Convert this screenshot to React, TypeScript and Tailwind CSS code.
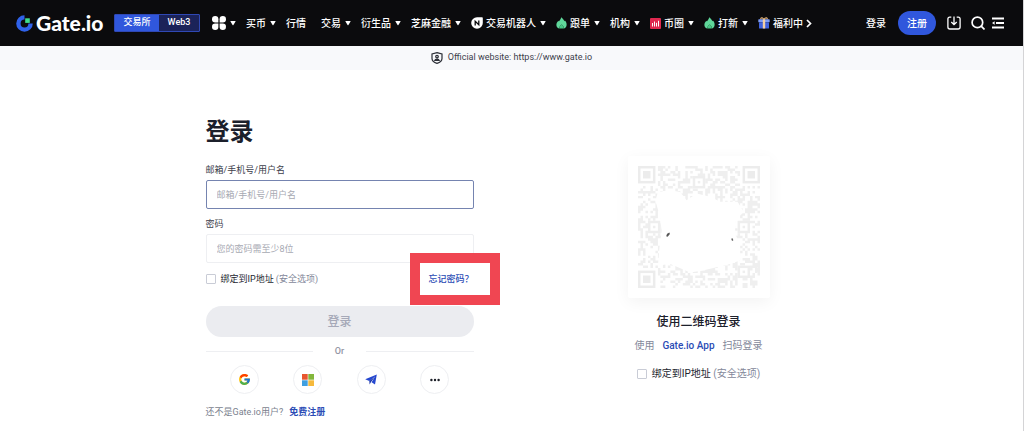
import type { ReactNode } from "react";
import { FcGoogle } from "react-icons/fc";

const MODULES = 49;

const FINDERS = [
  [0, 0],
  [42, 0],
  [0, 42]
];

const ALIGNMENTS = [
  [22, 4],
  [4, 22],
  [40, 22],
  [40, 40]
];

function inSquare(x: number, y: number, left: number, top: number, size: number) {
  return x >= left && x < left + size && y >= top && y < top + size;
}

// Small deterministic generator, so the code looks the same on every render.
function buildQrPath() {
  let seed = 20231;
  let d = "";
  for (let y = 0; y < MODULES; y++) {
    for (let x = 0; x < MODULES; x++) {
      seed = (seed * 1103515245 + 12345) % 2147483648;
      if (FINDERS.some(([fx, fy]) => inSquare(x, y, fx - 1, fy - 1, 9))) continue;
      if (ALIGNMENTS.some(([ax, ay]) => inSquare(x, y, ax, ay, 5))) continue;
      if (seed / 2147483648 < 0.45) d += `M${x} ${y}h1v1h-1z`;
    }
  }
  return d;
}

const QR_PATH = buildQrPath();

function QrCode() {
  return (
    <svg viewBox="0 0 49 49" className="block h-[122px] w-[122px]" role="img" aria-label="QR">
      <path d={QR_PATH} fill="#efefef" />
      {FINDERS.map(([x, y]) => (
        <g key={`${x}-${y}`}>
          <rect x={x + 0.5} y={y + 0.5} width="6" height="6" fill="none" stroke="#ececec" />
          <rect x={x + 2} y={y + 2} width="3" height="3" fill="#ececec" />
        </g>
      ))}
      {ALIGNMENTS.map(([x, y]) => (
        <g key={`${x}-${y}`}>
          <rect x={x + 0.5} y={y + 0.5} width="4" height="4" fill="none" stroke="#eeeeee" />
          <rect x={x + 2} y={y + 2} width="1" height="1" fill="#eeeeee" />
        </g>
      ))}
      <path
        d="M8 10.4 13 9.7 17 10.4 19.5 13.8 23.6 11 29 12.4 33 14.4 40 14.4 42.5 18.5 39 22 39 27 41 32 41 38 37 39.4 26 42 21 42.8 13 39.4 8 40 8.7 32 9.5 26 8.7 20 7 14z"
        fill="#fff"
      />
      <path d="M11.3 28.2l.4-1 .9-.5.2.6-.9 1.1z" fill="#555" />
      <path d="M37.4 29.2l.6-.2.3.8-.5.3z" fill="#666" />
    </svg>
  );
}

function Caret() {
  return (
    <svg viewBox="0 0 6 6" className="h-[6px] w-[6px] shrink-0" aria-hidden="true">
      <path d="M.8 1h4.4q.5 0 .3.5L3.4 5q-.4.5-.8 0L.5 1.5Q.3 1 .8 1z" fill="#fff" />
    </svg>
  );
}

function Flame() {
  return (
    <svg viewBox="0 0 11 12" className="h-3 w-[11px] shrink-0" aria-hidden="true">
      <path
        d="M5.2.3C6.8 1.4 8 2.9 8.3 4.3l.6-.7C10.2 5 10.9 6.6 10.6 8.2c-.2 1.8-1.5 3-2.9 3.4.4-1.4-.3-2.8-2-4.2-1.9 1.4-2.6 2.8-2.200 4.200C1.800 11.200.5 10 .4 8.200.2 6.400 1.200 5 2.400 3.700l.5.7C3.900 3.200 4.900 1.900 5.200.3z"
        fill="#5fd79a"
      />
      <path d="M5.7 7.400c1.700 1.400 2.400 2.800 2 4.200H3.500c-.4-1.400.3-2.800 2.200-4.200z" fill="#48c785" />
    </svg>
  );
}

function BotIcon() {
  return (
    <svg viewBox="0 0 12 12" className="h-3 w-3 shrink-0" aria-hidden="true">
      <path d="M6 .2h5q.8 0 .8.8v5A5.800 5.800 0 1 1 6 .2z" fill="#fff" />
      <path d="M4.200 8.600V4.200l3.600 3.600V3.400" fill="none" stroke="#0b0b0d" strokeWidth="1.300" />
    </svg>
  );
}

function ChartIcon() {
  return (
    <svg viewBox="0 0 11 11" className="h-[11px] w-[11px] shrink-0" aria-hidden="true">
      <rect width="11" height="11" rx="1" fill="#e0284f" />
      <path d="M2.500 8.500V5M4.500 8.500V3.500M6.500 8.500V4.800M8.500 8.500V2.800" stroke="#fff" strokeWidth="1" />
    </svg>
  );
}

function GiftIcon() {
  return (
    <svg viewBox="0 0 12 12" className="h-3 w-3 shrink-0" aria-hidden="true">
      <path d="M6 2.600C4.800.2 2.200.2 3 2.400M6 2.600C7.200.2 9.800.2 9 2.400" fill="none" stroke="#eab77c" strokeWidth="1.200" />
      <rect x=".3" y="2.300" width="11.400" height="3" rx=".6" fill="#7d9cf5" />
      <rect x="1" y="5.300" width="10" height="6.200" rx=".6" fill="#4063df" />
      <rect x="4.800" y="2.300" width="2.400" height="9.200" fill="#f3cfa3" />
    </svg>
  );
}

type NavItem = { label: string; icon?: ReactNode; menu?: boolean };

const NAV: NavItem[] = [
  { label: "买币", menu: true },
  { label: "行情" },
  { label: "交易", menu: true },
  { label: "衍生品", menu: true },
  { label: "芝麻金融", menu: true },
  { label: "交易机器人", icon: <BotIcon />, menu: true },
  { label: "跟单", icon: <Flame />, menu: true },
  { label: "机构", menu: true },
  { label: "币圈", icon: <ChartIcon />, menu: true },
  { label: "打新", icon: <Flame />, menu: true }
];

function Logo() {
  return (
    <a href="#" className="flex shrink-0 items-center gap-[3px] text-white">
      <svg viewBox="0 0 17 17" className="h-[17px] w-[17px]" aria-hidden="true">
        <path d="M8.500 2.400A6.100 6.100 0 1 0 14.600 8.500" fill="none" stroke="#2f62ea" strokeWidth="4.400" />
        <rect x="9.200" y="3.300" width="4.600" height="4.600" fill="#3fdc8d" />
      </svg>
      <span className="w-[67px] font-[Lato] text-[21px] leading-6 font-black">Gate.io</span>
    </a>
  );
}

function Header() {
  return (
    <header className="flex h-[46px] items-center bg-[#0b0b0d] pr-[19px] pl-4 text-[10px] font-medium text-white">
      <Logo />
      <div className="ml-[11px] flex h-[18px] w-[86px] shrink-0 overflow-hidden rounded-[1px] border border-[#2f48b4] bg-[#1b2359] text-[9px]">
        <button type="button" className="w-11 bg-[#3057dc]">
          交易所
        </button>
        <button type="button" className="flex-1">
          Web3
        </button>
      </div>
      <nav className="ml-3 flex min-w-0 flex-1 items-center gap-[10px] whitespace-nowrap">
        <button type="button" aria-label="产品" className="flex items-center gap-1">
          <svg viewBox="0 0 14 14" className="h-[14px] w-[14px]" fill="#fff" aria-hidden="true">
            <path d="M3.200 0A3.200 3.200 0 0 1 6.400 3.200V6.400H3.200A3.200 3.200 0 0 1 3.200 0z" />
            <path d="M10.800 0A3.200 3.200 0 0 1 10.800 6.400H7.600V3.200A3.200 3.200 0 0 1 10.800 0z" />
            <path d="M3.200 7.600H6.400V10.800A3.200 3.200 0 1 1 3.200 7.600z" />
            <path d="M7.600 7.600H10.800A3.200 3.200 0 1 1 7.600 10.800z" />
          </svg>
          <Caret />
        </button>
        {NAV.map((item) =>
          item.menu ? (
            <button key={item.label} type="button" className="flex shrink-0 items-center gap-1">
              <span className="flex items-center gap-[3px]">
                {item.icon}
                {item.label}
              </span>
              <Caret />
            </button>
          ) : (
            <a key={item.label} href="#" className="mr-[5px] shrink-0">
              {item.label}
            </a>
          )
        )}
        <a href="#" className="flex shrink-0 items-center gap-[3px]">
          <GiftIcon />
          <span>福利中</span>
        </a>
        <button type="button" aria-label="更多" className="-ml-[7px] shrink-0">
          <svg viewBox="0 0 6 9" className="h-[9px] w-[6px]" aria-hidden="true">
            <path d="M1 1l3.500 3.500L1 8" fill="none" stroke="#fff" strokeWidth="1.700" />
          </svg>
        </button>
      </nav>
      <div className="flex shrink-0 items-center">
        <a href="#">登录</a>
        <button type="button" className="ml-3 h-6 w-[38px] rounded-full bg-[#3057dc]">
          注册
        </button>
        <button type="button" aria-label="下载" className="ml-[11px]">
          <svg viewBox="0 0 14 14" className="h-[14px] w-[14px]" fill="none" stroke="#fff" strokeWidth="1.300" aria-hidden="true">
            <path d="M4.300 1.200H2.700Q.9 1.200.9 3v8q0 2 2 2h8.200q2 0 2-2V3q0-1.800-1.800-1.800H9.700M7 .5V8.500M4.300 6 7 8.700 9.700 6" />
          </svg>
        </button>
        <button type="button" aria-label="搜索" className="ml-[10px]">
          <svg viewBox="0 0 14 14" className="h-[14px] w-[14px]" fill="none" stroke="#fff" strokeWidth="1.700" aria-hidden="true">
            <circle cx="6.400" cy="6.400" r="5.300" />
            <path d="M10.200 10.200 13.500 13.500" />
          </svg>
        </button>
        <button type="button" aria-label="菜单" className="ml-[7px]">
          <svg viewBox="0 0 12 12" className="h-3 w-3" fill="none" stroke="#fff" strokeWidth="2" aria-hidden="true">
            <path d="M0 1.500H12M4 6H12M0 10.500H12" />
            <path d="M0 6l2.600-1.700v3.400z" fill="#fff" stroke="none" />
          </svg>
        </button>
      </div>
    </header>
  );
}

function SiteBanner() {
  return (
    <div className="flex h-6 items-center justify-center gap-[5px] bg-[#f8f9fb] text-[9px] text-[#3c404b]">
      <svg viewBox="0 0 12 12" className="h-3 w-3" fill="none" stroke="#2b2e36" strokeWidth="1.200" aria-hidden="true">
        <path d="M6 .7 11 2v4.500C11 9 8.700 10.500 6 11.400 3.300 10.500 1 9 1 6.500V2z" />
        <circle cx="6" cy="4.600" r="1.300" />
        <path d="M3.800 8.400C4.300 6.600 7.700 6.600 8.200 8.400z" />
      </svg>
      <span>Official website: https://www.gate.io</span>
    </div>
  );
}

function BindIp({ id }: { id: string }) {
  return (
    <div className="flex items-center gap-[5px] whitespace-nowrap">
      <input
        id={id}
        type="checkbox"
        className="h-[10px] w-[10px] shrink-0 appearance-none rounded-[1px] border border-[#c9ccd6] bg-white checked:bg-[#3057dc]"
      />
      <label htmlFor={id} className="text-[#23262f]">
        绑定到IP地址 <span className="text-[#84889a]">(安全选项)</span>
      </label>
    </div>
  );
}

const SOCIALS: { name: string; icon: ReactNode }[] = [
  { name: "Google", icon: <FcGoogle className="h-[13px] w-[13px]" /> },
  {
    name: "Microsoft",
    icon: (
      <svg viewBox="0 0 12 12" className="h-3 w-3" aria-hidden="true">
        <rect width="5.700" height="5.700" fill="#e8562f" />
        <rect x="6.300" width="5.700" height="5.700" fill="#83b73b" />
        <rect y="6.300" width="5.700" height="5.700" fill="#3f9fe0" />
        <rect x="6.300" y="6.300" width="5.700" height="5.700" fill="#f6b93b" />
      </svg>
    )
  },
  {
    name: "Telegram",
    icon: (
      <svg viewBox="0 0 12 11" className="h-[11px] w-3" fill="#2547d0" aria-hidden="true">
        <path d="M11.800.4 10 10.400 6.600 8.200 10 2.600 4.300 7 .2 5.300z" />
        <path d="M4.300 7 10 2.600 6 8.100 4.600 10.600z" fill="#1c37a8" />
      </svg>
    )
  },
  {
    name: "更多登录方式",
    icon: (
      <svg viewBox="0 0 10 4" className="h-1 w-[10px]" fill="#1c1f27" aria-hidden="true">
        <circle cx="1.400" cy="2" r="1.200" />
        <circle cx="5" cy="2" r="1.200" />
        <circle cx="8.600" cy="2" r="1.200" />
      </svg>
    )
  }
];

function LoginForm() {
  return (
    <form className="w-[268px] text-[9px] leading-3" onSubmit={(e) => e.preventDefault()}>
      <h1 className="text-[24px] leading-8 font-bold text-[#1c202b]">登录</h1>

      <label htmlFor="account" className="mt-4 block text-[#3c404b]">
        邮箱/手机号/用户名
      </label>
      <input
        id="account"
        type="text"
        placeholder="邮箱/手机号/用户名"
        className="mt-1 block h-[29px] w-full rounded-xs border border-[#7584b0] px-[10px] outline-none placeholder:text-[#a7a9b2]"
      />

      <label htmlFor="password" className="mt-[9px] block text-[#3c404b]">
        密码
      </label>
      <input
        id="password"
        type="password"
        placeholder="您的密码需至少8位"
        className="mt-1 block h-[29px] w-full rounded-xs border border-[#eeeff2] px-[10px] outline-none placeholder:text-[#a7a9b2]"
      />

      <div className="mt-[9px] flex h-[14px] items-center justify-between">
        <BindIp id="bind-ip" />
        <div className="relative">
          <div className="absolute -top-5 -right-[26px] h-[52px] w-[90px] border-[10px] border-[#f04652] bg-white" />
          <a href="#" className="relative font-medium text-[#2a4bb5]">
            忘记密码？
          </a>
        </div>
      </div>

      <button
        type="submit"
        disabled
        className="mt-5 block h-[31px] w-full rounded-full bg-[#ebecf0] text-[12px] font-medium text-[#a6a9b8]"
      >
        登录
      </button>

      <div className="mt-2 flex items-center gap-[22px] font-medium text-[#9295a3]">
        <span className="h-px flex-1 bg-[#eeeff2]" />
        Or
        <span className="h-px flex-1 bg-[#eeeff2]" />
      </div>

      <div className="mt-2 flex justify-between px-6">
        {SOCIALS.map((social) => (
          <button
            key={social.name}
            type="button"
            aria-label={social.name}
            className="flex h-[29px] w-[29px] items-center justify-center rounded-full border border-[#eeeff2]"
          >
            {social.icon}
          </button>
        ))}
      </div>

      <p className="mt-3 flex gap-[6px] text-[#7b7f8e]">
        还不是Gate.io用户?
        <a href="#" className="font-bold text-[#2a4bb5]">
          免费注册
        </a>
      </p>
    </form>
  );
}

function QrLogin() {
  return (
    <section className="flex w-[238px] flex-col items-center pt-10 text-[10px] leading-4">
      <div className="rounded-xs bg-white p-[10px] shadow-[0_4px_16px_rgba(0,0,0,0.05)]">
        <QrCode />
      </div>
      <h2 className="mt-4 text-[12px] font-medium text-[#1c202b]">使用二维码登录</h2>
      <p className="mt-2 flex gap-2 text-[#84889a]">
        使用
        <a href="#" className="font-medium text-[#2a4bb5]">
          Gate.io App
        </a>
        扫码登录
      </p>
      <div className="mt-3">
        <BindIp id="bind-ip-qr" />
      </div>
    </section>
  );
}

export default function App() {
  return (
    <div
      lang="zh-CN"
      className="min-h-screen border-r border-[#d4d4d6] bg-white font-[Roboto,'Noto_Sans_CJK_SC',sans-serif]"
    >
      <Header />
      <SiteBanner />
      <main className="mx-auto flex max-w-[612px] justify-between pt-[46px]">
        <LoginForm />
        <QrLogin />
      </main>
    </div>
  );
}
